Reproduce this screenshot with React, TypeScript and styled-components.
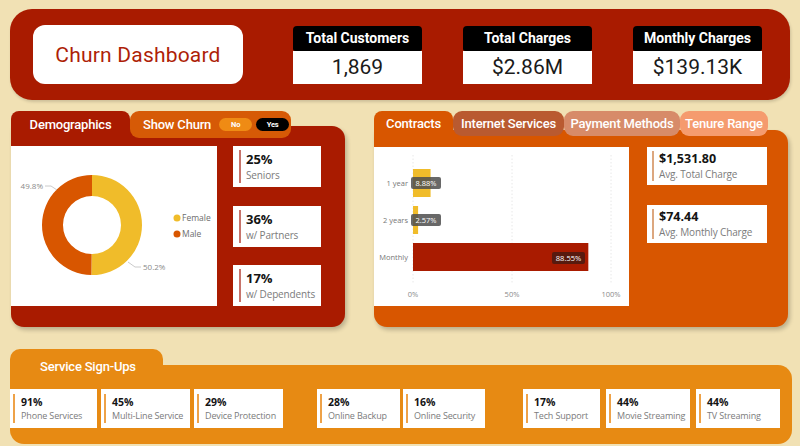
import React from "react";
import styled, { createGlobalStyle } from "styled-components";

const HEAD = `"Roboto", "Liberation Sans", sans-serif`;
const BODY = `"Open Sans", "Liberation Sans", sans-serif`;

const RED = "#a91b00";
const ORANGE = "#d85600";
const AMBER = "#e78a13";
const YELLOW = "#f0bc2a";

const GlobalStyle = createGlobalStyle`
  html, body { margin: 0; padding: 0; background: #f1e1b4; }
  body { font-family: ${BODY}; }
  * { box-sizing: border-box; }
`;

const Page = styled.div`
  width: 800px;
  height: 446px;
  overflow: hidden;
  padding: 9px 0 0 10px;
  display: flex;
  flex-direction: column;
  background: #f1e1b4;
`;

/* ---------- header ---------- */
const Header = styled.header`
  width: 780px;
  height: 91px;
  border-radius: 22px;
  background: ${RED};
  display: flex;
  align-items: center;
  padding-left: 23px;
  box-shadow: 1px 2px 3px rgba(0, 0, 0, 0.15);
`;

const TitleBox = styled.div`
  width: 210px;
  height: 59px;
  border-radius: 12px;
  background: #fff;
  display: flex;
  align-items: center;
  justify-content: center;
  font-family: ${HEAD};
  font-size: 21px;
  color: #ae1f08;
  letter-spacing: 0.2px;
  margin-right: 50px;
`;

const KpiRow = styled.div`
  display: flex;
  gap: 41px;
`;

const Kpi = styled.div`
  width: 129px;
  display: flex;
  flex-direction: column;
`;

const KpiLabel = styled.div`
  height: 25px;
  background: #000;
  border-radius: 4px 4px 2px 2px;
  color: #fff;
  font-family: ${HEAD};
  font-weight: 700;
  font-size: 14px;
  display: flex;
  align-items: center;
  justify-content: center;
`;

const KpiValue = styled.div`
  height: 33px;
  background: #fff;
  display: flex;
  align-items: center;
  justify-content: center;
  font-family: ${HEAD};
  font-size: 21px;
  color: #1a1a1a;
`;

/* ---------- panels ---------- */
const MidRow = styled.div`
  display: flex;
  align-items: flex-start;
  margin-top: 11px;
  height: 217px;
`;

const Panel = styled.section<{ $w: number; $ml: number }>`
  width: ${(p) => p.$w}px;
  margin-left: ${(p) => p.$ml}px;
  display: flex;
  flex-direction: column;
`;

const TabRow = styled.div<{ $h: number; $overlap: number }>`
  display: flex;
  height: ${(p) => p.$h}px;
  margin-bottom: -${(p) => p.$overlap}px;
  position: relative;
  z-index: 1;
`;

const PanelTab = styled.div<{ $bg: string; $w: number; $round?: boolean }>`
  width: ${(p) => p.$w}px;
  height: 100%;
  background: ${(p) => p.$bg};
  border-radius: ${(p) => (p.$round ? "9px" : "8px 8px 0 0")};
  display: flex;
  align-items: center;
  justify-content: center;
  font-family: ${HEAD};
  font-weight: 500;
  font-size: 13px;
  letter-spacing: -0.2px;
  color: #fff;
  white-space: nowrap;
`;

const ToggleTab = styled.div`
  width: 161px;
  height: 100%;
  background: #d65a06;
  border-radius: 9px;
  display: flex;
  align-items: center;
  padding-left: 13px;
  font-family: ${HEAD};
  font-weight: 500;
  font-size: 13px;
  letter-spacing: -0.2px;
  color: #fff;
`;

const Pill = styled.span<{ $bg: string; $ml: number }>`
  width: 33px;
  height: 13px;
  margin-left: ${(p) => p.$ml}px;
  border-radius: 7px;
  background: ${(p) => p.$bg};
  display: flex;
  align-items: center;
  justify-content: center;
  font-family: ${HEAD};
  font-weight: 700;
  font-size: 7.5px;
  color: #fff;
`;

const PanelBody = styled.div<{ $bg: string; $h: number; $pt: number }>`
  background: ${(p) => p.$bg};
  height: ${(p) => p.$h}px;
  padding-top: ${(p) => p.$pt}px;
  border-radius: 0 13px 13px 13px;
  display: flex;
  align-items: flex-start;
  box-shadow: 2px 3px 4px rgba(0, 0, 0, 0.22);
`;

const ChartBox = styled.div<{ $w: number; $h: number }>`
  width: ${(p) => p.$w}px;
  height: ${(p) => p.$h}px;
  background: #fff;
  flex-shrink: 0;
  svg {
    display: block;
    font-family: ${BODY};
  }
`;

const CardColumn = styled.div<{ $ml: number; $w: number; $h?: number; $gap?: number }>`
  margin-left: ${(p) => p.$ml}px;
  width: ${(p) => p.$w}px;
  ${(p) => (p.$h ? `height: ${p.$h}px;` : "")}
  display: flex;
  flex-direction: column;
  justify-content: ${(p) => (p.$gap ? "flex-start" : "space-between")};
  gap: ${(p) => p.$gap ?? 0}px;
`;

/* ---------- stat cards ---------- */
const StatCard = styled.div<{ $w?: number; $h: number; $pl: number; $inset: number }>`
  ${(p) => (p.$w ? `width: ${p.$w}px;` : "")}
  height: ${(p) => p.$h}px;
  background: #fff;
  display: flex;
  align-items: stretch;
  padding: ${(p) => p.$inset}px 0 ${(p) => p.$inset}px ${(p) => p.$pl}px;
  flex-shrink: 0;
`;

const Accent = styled.div<{ $color: string }>`
  width: 2px;
  background: ${(p) => p.$color};
  flex-shrink: 0;
`;

const StatText = styled.div<{ $ml: number }>`
  margin-left: ${(p) => p.$ml}px;
  display: flex;
  flex-direction: column;
  justify-content: center;
  white-space: nowrap;
`;

const StatValue = styled.div<{ $size: number; $lh: number }>`
  font-family: ${BODY};
  font-weight: 700;
  font-size: ${(p) => p.$size}px;
  line-height: ${(p) => p.$lh}px;
  color: #141414;
`;

const StatLabel = styled.div<{ $size: number; $lh: number }>`
  font-family: ${BODY};
  font-size: ${(p) => p.$size}px;
  line-height: ${(p) => p.$lh}px;
  color: #7b7b7b;
  letter-spacing: -0.15px;
`;

/* ---------- services ---------- */
const ServiceSection = styled.section`
  width: 782px;
  margin-top: 21px;
  display: flex;
  flex-direction: column;
`;

const ServiceTab = styled.div`
  width: 153px;
  height: 34px;
  margin-bottom: -18px;
  background: ${AMBER};
  border-radius: 10px 10px 0 0;
  display: flex;
  align-items: center;
  padding-left: 30px;
  font-family: ${HEAD};
  font-weight: 500;
  font-size: 13px;
  letter-spacing: -0.2px;
  color: #fff;
  position: relative;
  z-index: 1;
`;

const ServiceBody = styled.div`
  height: 79px;
  background: ${AMBER};
  border-radius: 0 14px 14px 14px;
  padding-top: 24px;
  display: flex;
  align-items: flex-start;
`;

const ServiceGroup = styled.div<{ $gap: number; $ml: number }>`
  display: flex;
  gap: ${(p) => p.$gap}px;
  margin-left: ${(p) => p.$ml}px;
`;

/* ---------- charts ---------- */
function arcPath(cx: number, cy: number, R: number, r: number, a0: number, a1: number) {
  const rad = (d: number) => (d * Math.PI) / 180;
  const p = (rr: number, a: number) => [cx + rr * Math.cos(rad(a)), cy + rr * Math.sin(rad(a))];
  const large = a1 - a0 > 180 ? 1 : 0;
  const [x0, y0] = p(R, a0);
  const [x1, y1] = p(R, a1);
  const [x2, y2] = p(r, a1);
  const [x3, y3] = p(r, a0);
  return `M${x0} ${y0} A${R} ${R} 0 ${large} 1 ${x1} ${y1} L${x2} ${y2} A${r} ${r} 0 ${large} 0 ${x3} ${y3} Z`;
}

const Donut = () => {
  const cx = 81;
  const cy = 79;
  const split = -90 + 360 * 0.502;
  return (
    <svg width="206" height="160" viewBox="0 0 206 160">
      <path d={arcPath(cx, cy, 50, 29, -90, split)} fill={YELLOW} />
      <path d={arcPath(cx, cy, 50, 29, split, 270)} fill={ORANGE} />
      <polyline points="34,40 40,40 46,44" fill="none" stroke="#bdbdbd" strokeWidth="0.8" />
      <text x="32" y="43" fontSize="8" fill="#8a8a8a" textAnchor="end">49.8%</text>
      <polyline points="117,116 124,121 130,121" fill="none" stroke="#bdbdbd" strokeWidth="0.8" />
      <text x="132" y="124" fontSize="8" fill="#8a8a8a">50.2%</text>
      <circle cx="166" cy="72" r="3.5" fill={YELLOW} />
      <text x="171" y="75" fontSize="8.5" fill="#6d6d6d">Female</text>
      <circle cx="166" cy="88" r="3.5" fill={ORANGE} />
      <text x="171" y="91" fontSize="8.5" fill="#6d6d6d">Male</text>
    </svg>
  );
};

const bars = [
  { cat: "1 year", v: 8.88, y: 22, color: YELLOW, box: { x: 37, w: 30, y: 30, fill: "#4d4d4d" } },
  { cat: "2 years", v: 2.57, y: 59, color: YELLOW, box: { x: 37, w: 30, y: 67, fill: "#4d4d4d" } },
  { cat: "Monthly", v: 88.55, y: 96, color: RED, box: { x: 178, w: 33, y: 105, fill: "#4a1a10" } },
];

const BarChart = () => {
  const x0 = 39;
  const span = 198;
  return (
    <svg width="255" height="159" viewBox="0 0 255 159">
      {[0, 0.5, 1].map((t) => (
        <line
          key={t}
          x1={x0 + span * t}
          x2={x0 + span * t}
          y1="8"
          y2="137"
          stroke="#e2e2e2"
          strokeWidth="0.8"
          strokeDasharray="1.5 2"
        />
      ))}
      {bars.map((b) => (
        <g key={b.cat}>
          <text x="34" y={b.y + 17} fontSize="7.5" fill="#777" textAnchor="end">
            {b.cat}
          </text>
          <rect x={x0} y={b.y} width={(span * b.v) / 100} height="28" fill={b.color} />
          <rect x={b.box.x} y={b.box.y} width={b.box.w} height="12" rx="2" fill={b.box.fill} opacity="0.85" />
          <text x={b.box.x + b.box.w / 2} y={b.box.y + 9} fontSize="7.5" fill="#fff" textAnchor="middle">
            {b.v.toFixed(2)}%
          </text>
        </g>
      ))}
      {["0%", "50%", "100%"].map((t, i) => (
        <text key={t} x={x0 + span * i * 0.5} y="150" fontSize="7.5" fill="#8a8a8a" textAnchor="middle">
          {t}
        </text>
      ))}
    </svg>
  );
};

/* ---------- data ---------- */
const kpis = [
  { label: "Total Customers", value: "1,869" },
  { label: "Total Charges", value: "$2.86M" },
  { label: "Monthly Charges", value: "$139.13K" },
];

const demoStats = [
  { value: "25%", label: "Seniors" },
  { value: "36%", label: "w/ Partners" },
  { value: "17%", label: "w/ Dependents" },
];

const contractStats = [
  { value: "$1,531.80", label: "Avg. Total Charge" },
  { value: "$74.44", label: "Avg. Monthly Charge" },
];

const serviceGroups = [
  {
    gap: 4,
    ml: 0,
    items: [
      { v: "91%", l: "Phone Services", w: 87 },
      { v: "45%", l: "Multi-Line Service", w: 89 },
      { v: "29%", l: "Device Protection", w: 89 },
    ],
  },
  {
    gap: 3,
    ml: 34,
    items: [
      { v: "28%", l: "Online Backup", w: 83 },
      { v: "16%", l: "Online Security", w: 82 },
    ],
  },
  {
    gap: 6,
    ml: 38,
    items: [
      { v: "17%", l: "Tech Support", w: 77 },
      { v: "44%", l: "Movie Streaming", w: 84 },
      { v: "44%", l: "TV Streaming", w: 84 },
    ],
  },
];

const contractTabs = [
  { label: "Contracts", w: 79, bg: ORANGE, active: true },
  { label: "Internet Services", w: 111, bg: "#b95a30" },
  { label: "Payment Methods", w: 116, bg: "#d78b69" },
  { label: "Tenure Range", w: 88, bg: "#f59b6e" },
];

export default function App() {
  return (
    <>
      <GlobalStyle />
      <Page>
        <Header>
          <TitleBox>Churn Dashboard</TitleBox>
          <KpiRow>
            {kpis.map((k) => (
              <Kpi key={k.label}>
                <KpiLabel>{k.label}</KpiLabel>
                <KpiValue>{k.value}</KpiValue>
              </Kpi>
            ))}
          </KpiRow>
        </Header>

        <MidRow>
          <Panel $w={334} $ml={1}>
            <TabRow $h={27} $overlap={12}>
              <PanelTab $bg={RED} $w={119}>Demographics</PanelTab>
              <ToggleTab>
                Show Churn
                <Pill $bg="#ef8b14" $ml={8}>No</Pill>
                <Pill $bg="#000" $ml={4}>Yes</Pill>
              </ToggleTab>
            </TabRow>
            <PanelBody $bg={RED} $h={201} $pt={20}>
              <ChartBox $w={206} $h={160}>
                <Donut />
              </ChartBox>
              <CardColumn $ml={16} $w={88} $h={160}>
                {demoStats.map((s) => (
                  <StatCard key={s.label} $h={41} $pl={6} $inset={4}>
                    <Accent $color="#c7736a" />
                    <StatText $ml={5}>
                      <StatValue $size={13} $lh={17}>{s.value}</StatValue>
                      <StatLabel $size={10} $lh={14}>{s.label}</StatLabel>
                    </StatText>
                  </StatCard>
                ))}
              </CardColumn>
            </PanelBody>
          </Panel>

          <Panel $w={414} $ml={29}>
            <TabRow $h={25} $overlap={6}>
              {contractTabs.map((t) => (
                <PanelTab key={t.label} $bg={t.bg} $w={t.w} $round={!t.active}>
                  {t.label}
                </PanelTab>
              ))}
            </TabRow>
            <PanelBody $bg={ORANGE} $h={197} $pt={17}>
              <ChartBox $w={255} $h={159}>
                <BarChart />
              </ChartBox>
              <CardColumn $ml={18} $w={120} $gap={20}>
                {contractStats.map((s) => (
                  <StatCard key={s.label} $h={38} $pl={5} $inset={4}>
                    <Accent $color="#dca77f" />
                    <StatText $ml={5}>
                      <StatValue $size={12.5} $lh={16}>{s.value}</StatValue>
                      <StatLabel $size={10} $lh={14}>{s.label}</StatLabel>
                    </StatText>
                  </StatCard>
                ))}
              </CardColumn>
            </PanelBody>
          </Panel>
        </MidRow>

        <ServiceSection>
          <ServiceTab>Service Sign-Ups</ServiceTab>
          <ServiceBody>
            {serviceGroups.map((g, gi) => (
              <ServiceGroup key={gi} $gap={g.gap} $ml={g.ml}>
                {g.items.map((s) => (
                  <StatCard key={s.l} $w={s.w} $h={39} $pl={3} $inset={5}>
                    <Accent $color="#eea248" />
                    <StatText $ml={6}>
                      <StatValue $size={10.5} $lh={14}>{s.v}</StatValue>
                      <StatLabel $size={9} $lh={13}>{s.l}</StatLabel>
                    </StatText>
                  </StatCard>
                ))}
              </ServiceGroup>
            ))}
          </ServiceBody>
        </ServiceSection>
      </Page>
    </>
  );
}
